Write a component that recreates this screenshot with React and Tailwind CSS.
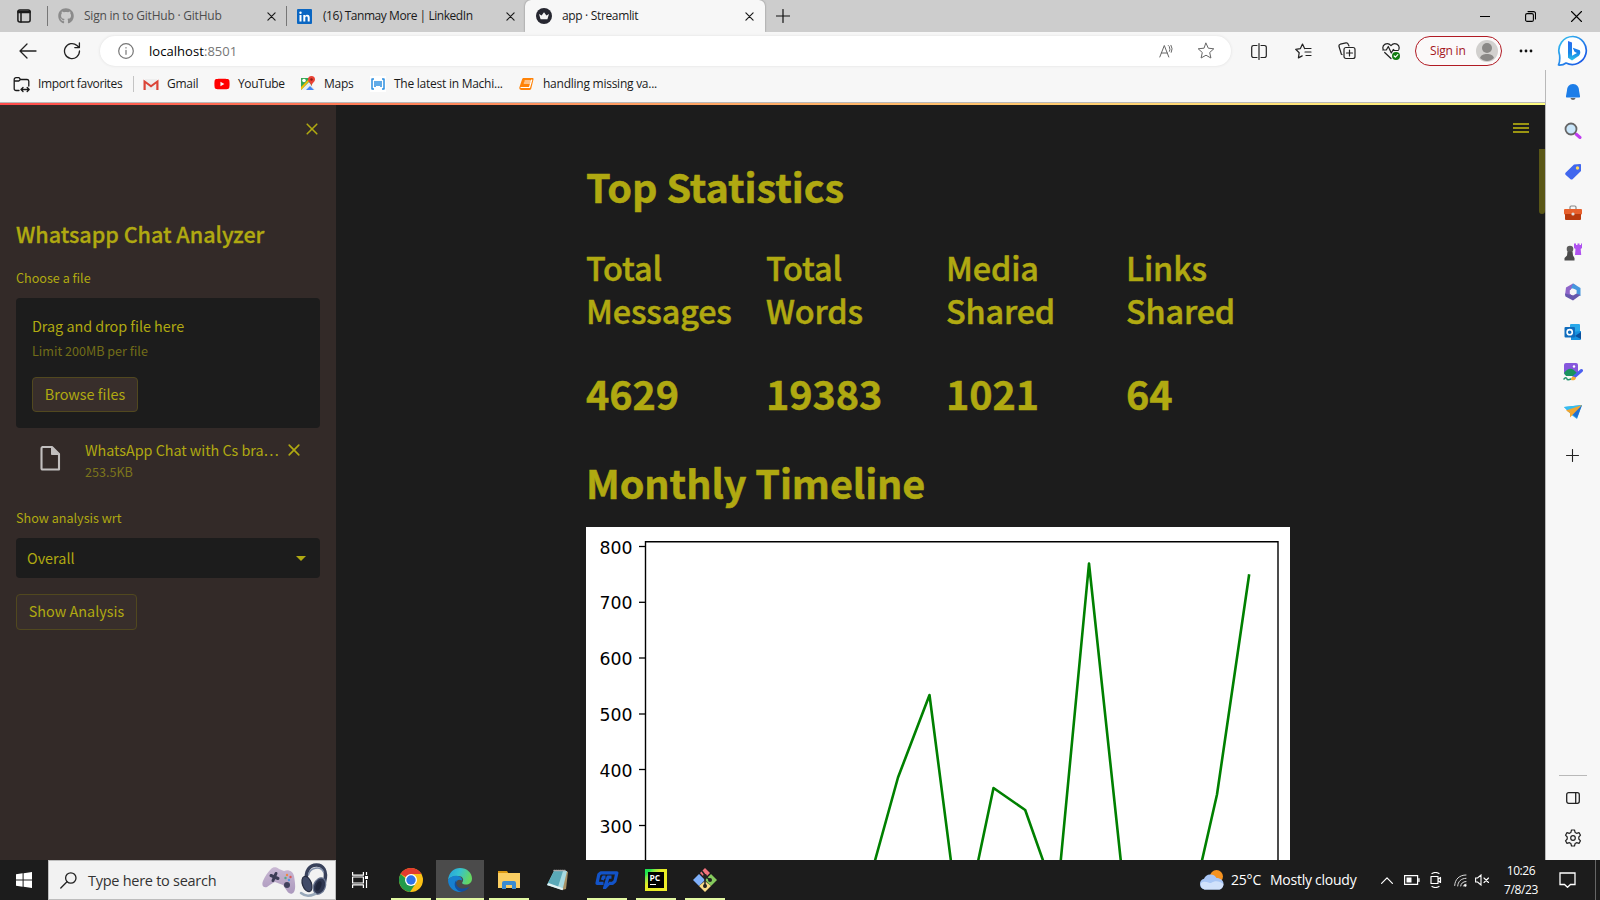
import React from "react";
import { FaGithub, FaYoutube } from "react-icons/fa";

const S = ({ w = 16, h, box, className = "", children, ...rest }) => (
  <svg
    width={w}
    height={h || w}
    viewBox={box || `0 0 ${w} ${h || w}`}
    fill="none"
    stroke="currentColor"
    strokeWidth="1.2"
    strokeLinecap="round"
    strokeLinejoin="round"
    className={`block shrink-0 ${className}`}
    {...rest}
  >
    {children}
  </svg>
);

const Cross = ({ w = 9, sw = 1.3 }) => (
  <S w={w} box="0 0 10 10" strokeWidth={sw}>
    <path d="M1 1l8 8M9 1L1 9" />
  </S>
);

function TabStrip() {
  return (
    <div className="flex h-8 shrink-0 items-stretch bg-[#cdcdcd] text-[12px] tracking-[-0.22px] text-[#1a1a1a]">
      <div className="flex w-[47px] items-center pl-[17px]">
        <S w={14} strokeWidth="1.5">
          <rect x="0.9" y="1" width="12.2" height="12" rx="2" />
          <path d="M1 2.5h12M1 3.6h12M4 4v9" />
        </S>
      </div>
      <div className="flex w-[239px] items-center">
        <div className="h-5 w-px bg-[#777]" />
        <FaGithub className="ml-[10px] size-4 text-[#8b8b8b]" />
        <span className="ml-[10px] w-[183px] whitespace-nowrap text-[#4d4d4d]">Sign in to GitHub · GitHub</span>
        <Cross />
      </div>
      <div className="flex w-[239px] items-center">
        <div className="h-5 w-px bg-[#777]" />
        <div className="ml-[10px] flex size-[15px] items-center justify-center rounded-[1px] bg-[#0a66c2]">
          <S w={11} stroke="none" fill="#fff">
            <rect x="0.5" y="4" width="2" height="6.5" />
            <circle cx="1.5" cy="1.8" r="1.2" />
            <path d="M4.3 4h2v1c.9-1.700 4.400-1.700 4.400 1.500v4h-2V7c0-2-2.400-1.800-2.400 0v3.500h-2z" />
          </S>
        </div>
        <span className="ml-[11px] w-[183px] tracking-[-0.45px] whitespace-nowrap">(16) Tanmay More | LinkedIn</span>
        <Cross />
      </div>
      <div className="flex w-[240px] items-center rounded-t-[6px] bg-[#f7f7f7] shadow-[0_0_2px_#777]">
        <S w={16} className="ml-[11px]" stroke="none">
          <circle cx="8" cy="8" r="8" fill="#262730" />
          <path d="M3 6l2.600 1.500L8 4.300l2.400 3.200L13 6l-1.600 5.200H4.600z" fill="#f5f5f5" />
        </S>
        <span className="ml-[10px] w-[183px] tracking-[-0.34px] whitespace-nowrap">app · Streamlit</span>
        <Cross />
      </div>
      <div className="flex flex-1 items-center pl-[11px]">
        <S w={14} strokeWidth="1.200" stroke="#111">
          <path d="M7 .5v13M.5 7h13" />
        </S>
      </div>
      <div className="flex items-center gap-[35px] pr-[18px] text-black">
        <S w={10} strokeWidth="1"><path d="M0 5.500h10" /></S>
        <S w={11} strokeWidth="1.100">
          <rect x=".6" y="2.600" width="7.800" height="7.800" rx="1.500" />
          <path d="M3 .6h5.500a2 2 0 0 1 2 2V8" />
        </S>
        <S w={11} strokeWidth="1.100"><path d="M.5.5l10 10M10.500.5l-10 10" /></S>
      </div>
    </div>
  );
}

function AddressBar() {
  return (
    <div className="flex h-[38px] shrink-0 items-center bg-[#f7f7f7] text-[#222]">
      <S w={18} h={16} className="ml-[19px]" strokeWidth="1.300">
        <path d="M17 8H1.500M8 1L1 8l7 7" />
      </S>
      <S w={18} className="ml-[26px]" strokeWidth="1.300">
        <path d="M16.500 9A7.500 7.500 0 1 1 14 3.500L16.200 5.500M16.400 1v4.600h-4.600" />
      </S>
      <div className="ml-[19px] flex h-[30px] w-[1131px] items-center rounded-full bg-white shadow-[0_0_3px_#ddd]">
        <S w={16} className="ml-[18px] text-[#767676]">
          <circle cx="8" cy="8" r="7.300" />
          <path d="M8 7.300v4M8 4.600v.3" />
        </S>
        <span className="ml-[15px] flex-1 pt-px text-[13px] tracking-[0.050px] text-black">
          localhost<span className="text-[#767676]">:8501</span>
        </span>
        <S w={16} className="text-[#666]" strokeWidth="1">
          <path d="M.8 14L5.300 2.500 9.800 14M2.300 10h6M10.500 4.300a4 4 0 0 1 0 4M12 2.300a7 7 0 0 1 .3 7M9.300 2.500l1 1" />
        </S>
        <S w={18} className="ml-[22px] mr-4 text-[#666]" strokeWidth="1">
          <path d="M9 1.200l2.300 5 5.500.6-4.100 3.700 1.200 5.500L9 13.200 4.100 16l1.200-5.500-4.100-3.700 5.500-.6z" />
        </S>
      </div>
      <S w={16} h={17} className="ml-5">
        <path d="M6 2.500H2.500a1.800 1.800 0 0 0-1.800 1.800v8.400a1.800 1.800 0 0 0 1.800 1.800H6M10 2.500h3.500a1.800 1.800 0 0 1 1.800 1.800v8.400a1.800 1.800 0 0 1-1.800 1.800H10M8 .6v15.800" />
      </S>
      <S w={17} h={17} className="ml-7">
        <path d="M9.600 5.600L7.500 1 5.400 5.600.7 6.300l3.500 3.400-.8 5.200 3.800-2M9.600 5.500H16M10 9h6M11 12.500h5" />
      </S>
      <S w={18} h={18} className="ml-[26px]">
        <path d="M4 12.500l-.6-.3L1 4.500A2 2 0 0 1 2.300 2.200L8 .9a2 2 0 0 1 2.200 1.300L11 4" />
        <rect x="6" y="5.500" width="11" height="11" rx="2" />
        <path d="M11.500 8v6M8.500 11h6" />
      </S>
      <S w={18} h={18} className="ml-[26px]">
        <path d="M1.200 7.500C-.5 2.500 5.500-.500 9 3.600 12.500-.5 18.500 2.500 16.800 7.500M2.700 10.500L9 16.500M.8 8h3.500l2-3.500 3 6.500 2-3.500 1 1h4" />
        <circle cx="14" cy="14" r="4" fill="#107c10" stroke="none" />
        <path d="M12.200 14l1.200 1.200 2.400-2.500" stroke="#fff" />
      </S>
      <div className="ml-[15px] flex h-[30px] w-[87px] items-center justify-between rounded-full border border-[#b11b24] bg-[#fbf9f9] pl-[14px] pr-[3px] text-[12px] tracking-[-0.200px] text-[#a4161d]">
        <span className="whitespace-nowrap">Sign in</span>
        <S w={22} stroke="none">
          <circle cx="11" cy="11" r="11" fill="#d2d0ce" />
          <circle cx="11" cy="8" r="5" fill="#8a8886" />
          <path d="M4 18c1-5.500 13-5.500 14 0-4 4-10 4-14 0z" fill="#8a8886" />
        </S>
      </div>
      <S w={14} h={4} className="ml-[17px]" stroke="none" fill="#111">
        <circle cx="2" cy="2" r="1.400" /><circle cx="7" cy="2" r="1.400" /><circle cx="12" cy="2" r="1.400" />
      </S>
      <S w={32} className="ml-6" stroke="none">
        <defs>
          <linearGradient id="bingA" x1="0" y1="0" x2="1" y2="1">
            <stop offset="0" stopColor="#35c5f0" /><stop offset="1" stopColor="#174ae4" />
          </linearGradient>
          <linearGradient id="bingB" x1="0" y1="0" x2="0" y2="1">
            <stop offset="0" stopColor="#2c6bf0" /><stop offset=".6" stopColor="#1786e8" /><stop offset="1" stopColor="#2cc3e8" />
          </linearGradient>
        </defs>
        <path d="M16 1.500a14 14 0 1 1-7 26.500c-2 1.500-5 2.200-7.500 2C3 27 3 24 2.600 20A14 14 0 0 1 16 1.500z" fill="#fff" stroke="url(#bingA)" strokeWidth="1.700" />
        <path d="M11 6l4 1.500v13.200l5-2.700-2.500-1.300-1.700-4 7 2.600c1.400 3.300-.5 5.500-2 6.300L15 25.500l-4-2.800z" fill="url(#bingB)" />
      </S>
    </div>
  );
}

function Favorites() {
  const t = "whitespace-nowrap";
  return (
    <div className="flex h-8 shrink-0 items-center bg-[#f7f7f7] pb-[4px] text-[12px] tracking-[-0.250px] text-[#1a1a1a]">
      <S w={17} h={17} className="ml-[13px]" strokeWidth="1.300">
        <path d="M6 14.500H3A1.800 1.800 0 0 1 1.200 12.700V3.500A1.800 1.800 0 0 1 3 1.700h3l1.500 1.800H14A1.800 1.800 0 0 1 15.800 5v5M1.200 5h4.600l1.700-1.500M8.500 13.500h7.500M10 11.500l-2 2 2 2M14.200 11.500l2 2-2 2" />
      </S>
      <span className={`ml-2 w-[95px] tracking-[-0.350px] ${t}`}>Import favorites</span>
      <div className="h-4 w-px bg-[#c4c4c4]" />
      <S w={16} h={12} className="ml-[9px]" stroke="none">
        <path d="M2 1h12v11H2z" fill="#eee" />
        <path d="M.5 12V1.500L8 7l7.500-5.500V12h-2.200V5.500L8 9.500 2.700 5.500V12z" fill="#db4437" />
      </S>
      <span className={`ml-2 w-[47px] ${t}`}>Gmail</span>
      <FaYoutube className="size-4 text-[#f00]" />
      <span className={`ml-2 w-[62px] tracking-[-0.400px] ${t}`}>YouTube</span>
      <S w={16} stroke="none">
        <path d="M1 2h11v12H1z" fill="#34a853" />
        <path d="M1 14L9 6l6 8z" fill="#e8eaed" />
        <path d="M6 14l4-4 4 4z" fill="#4285f4" />
        <path d="M1 11l9-9h2L1 14z" fill="#fbbc04" />
        <circle cx="4" cy="4.500" r="1.800" fill="#fff" />
        <path d="M11.500 0a3.500 3.500 0 0 1 3.500 3.500c0 2.500-3 3.500-3.500 6.500-.5-3-3.500-4-3.500-6.500A3.500 3.500 0 0 1 11.500 0z" fill="#ea4335" />
        <circle cx="11.500" cy="3.500" r="1.200" fill="#8c1d18" />
      </S>
      <span className={`ml-2 w-[46px] ${t}`}>Maps</span>
      <S w={16} className="bg-white" stroke="#2d8fe0" strokeWidth="1.500" strokeLinecap="butt">
        <path d="M4 3H2v10h2M12 3h2v10h-2M5 5v6M7 5v5M9 5v5M11 5v6" />
      </S>
      <span className={`ml-2 w-[126px] ${t}`}>The latest in Machi...</span>
      <S w={15} stroke="none" className="-ml-px">
        <path d="M4.500 1h9c.8 0 1.200.6 1 1.300l-2.300 9.500c-.2.700-.7 1.200-1.500 1.200H2.500C1 13-.2 12 .5 10L3 2.500C3.300 1.600 3.700 1 4.500 1z" fill="#ff8308" />
        <path d="M6 4h5.500M5.300 6h5.500M2 10.500h8.500L12.700 3" stroke="#fff" />
      </S>
      <span className={`ml-[9px] ${t}`}>handling missing va...</span>
    </div>
  );
}

const ACCENT = "text-[#b0a911]";

function Sidebar() {
  return (
    <aside className={`flex w-[336px] shrink-0 flex-col bg-[#332a28] px-4 font-['Noto_Sans_CJK_JP',sans-serif] ${ACCENT}`}>
      <div className="mt-[18px] flex justify-end pr-[2px]"><Cross w={12} sw={1.300} /></div>
      <h2 className="mt-[84px] text-[21.600px] leading-[30px] font-medium tracking-[-0.030px] whitespace-nowrap [-webkit-text-stroke:0.3px]">Whatsapp Chat Analyzer</h2>
      <p className="mt-[19px] text-[12.600px] leading-5">Choose a file</p>
      <div className="mt-[10px] flex h-[130px] flex-col items-start rounded-[4px] bg-[#1c1c1c] px-4 pt-4">
        <span className="text-[14.400px] leading-6 tracking-[-0.030px]">Drag and drop file here</span>
        <span className="mt-[3px] text-[12.600px] leading-5 text-[#726d18]">Limit 200MB per file</span>
        <button className="mt-4 flex h-[35px] w-[106px] items-center justify-center rounded-[4px] border border-[#51481f] bg-[#382e2b] pb-[2px] text-[14.400px]">Browse files</button>
      </div>
      <div className="mt-2 flex h-[50px] items-start pl-[21px]">
        <S w={26} h={26} className="mt-[9px] text-[#c2bfbf]" strokeWidth="2">
          <path d="M5.500 2h9.500l7 7v15.500h-16.500a1 1 0 0 1-1-1v-20a1.500 1.500 0 0 1 1-1.500z" strokeWidth="2.100" />
          <path d="M14.500 2v7.500H22z" fill="currentColor" strokeWidth="1" />
        </S>
        <div className="ml-[22px] w-[200px]">
          <div className="pt-[2px] text-[14.400px] leading-6 tracking-[-0.050px] whitespace-nowrap">WhatsApp Chat with Cs bra…</div>
          <div className="text-[12.600px] leading-5 text-[#7c751b]">253.5KB</div>
        </div>
        <div className="mt-2 ml-[3px]"><Cross w={12} sw={1.400} /></div>
      </div>
      <p className="mt-[22px] text-[12.600px] leading-5">Show analysis wrt</p>
      <div className="mt-[10px] flex h-10 items-center justify-between rounded-[4px] bg-[#1c1c1c] pr-[14px] pl-[11px] text-[14.400px]">
        <span>Overall</span>
        <S w={10} h={5} stroke="none" fill="#b0a911"><path d="M0 0h10L5 5z" /></S>
      </div>
      <button className="mt-4 flex h-9 w-[121px] items-center justify-center rounded-[4px] border border-[#51481f] bg-[#382e2b] pb-[3px] text-[14.400px] whitespace-nowrap">Show Analysis</button>
    </aside>
  );
}

const ticks = [
  [800, 19.500], [700, 75.300], [600, 131], [500, 187], [400, 242.500], [300, 298.500],
];

function Chart() {
  return (
    <svg width="704" height="340" viewBox="0 0 704 340" className="mt-[19px] block bg-white">
      <path d="M59.500 345V14.800H692V345" fill="none" stroke="#000" strokeWidth="1.400" />
      {ticks.map(([v, y]) => (
        <g key={v}>
          <path d={`M53 ${y}h6`} stroke="#000" strokeWidth="1.300" />
          <text x="46.500" y={y + 7} textAnchor="end" fontSize="17.300" fontFamily="DejaVu Sans, sans-serif" fill="#000">{v}</text>
        </g>
      ))}
      <path
        d="M280 366L312 250.500 343.500 168 375.300 414 407.500 261 439.200 283 471 373 503 36.500 536 345M607 373L631 267.500 663 48.500"
        fill="none" stroke="#008000" strokeWidth="2.600" strokeLinejoin="round" strokeLinecap="square"
      />
    </svg>
  );
}

const stats = [
  ["Total", "Messages", "4629"],
  ["Total", "Words", "19383"],
  ["Media", "Shared", "1021"],
  ["Links", "Shared", "64"],
];

function Main() {
  return (
    <main className={`relative flex-1 overflow-hidden bg-[#1c1c1c] pl-[250px] font-['Noto_Sans_CJK_JP',sans-serif] ${ACCENT}`}>
      <S w={16} h={10} className="absolute top-[18px] right-4" strokeWidth="2" strokeLinecap="butt" stroke="#9b9512">
        <path d="M0 1h16M0 5h16M0 9h16" />
      </S>
      <div className="absolute top-11 right-0 h-[65px] w-[6px] rounded-b-[3px] bg-[#5a5716]" />
      <h1 className="mt-[54px] text-[39.600px] leading-[53px] font-bold tracking-[-0.080px] [-webkit-text-stroke:0.5px]">Top Statistics</h1>
      <div className="mt-[33px] grid w-[704px] grid-cols-4 gap-4">
        {stats.map(([a, b, n]) => (
          <div key={a + b} className="whitespace-nowrap">
            <h2 className="text-[32.400px] leading-[43px] font-medium tracking-[-0.160px] [-webkit-text-stroke:0.5px]">{a}<br />{b}</h2>
            <div className="mt-[35px] text-[39.600px] leading-[53px] font-bold tracking-[-0.100px] [-webkit-text-stroke:0.5px]">{n}</div>
          </div>
        ))}
      </div>
      <h1 className="mt-[36px] text-[39.600px] leading-[53px] font-bold tracking-[-0.100px] [-webkit-text-stroke:0.5px]">Monthly Timeline</h1>
      <Chart />
    </main>
  );
}

function EdgeBar() {
  return (
    <aside className="flex w-[55px] shrink-0 flex-col items-center border-l border-[#b9b9b9] bg-[#f7f7f7] pt-[13px] pr-px text-[#222]">
      <div className="flex flex-col items-center gap-[22px]">
        <S w={18} stroke="none">
          <path d="M9 1c4 0 6 3 6 6.500l1 5.500c.2 1-.3 1.500-1 1.500H3c-.7 0-1.200-.5-1-1.500l1-5.500C3 4 5 1 9 1z" fill="#1c7de8" />
          <path d="M6.500 15h5c-.4 2.500-4.600 2.500-5 0z" fill="#666" />
        </S>
        <S w={18} className="-mt-px mb-px">
          <path d="M12 12l4 3.500" stroke="#c03cf0" strokeWidth="3" />
          <circle cx="7" cy="7" r="5.500" fill="#c9e6fa" stroke="#666" strokeWidth="1.800" />
        </S>
        <S w={18} stroke="none">
          <path d="M10 1.500l6-.5c.6 0 1 .4 1 1v6l-8.200 8c-.8.800-1.700.8-2.500 0L1.800 12c-.8-.8-.8-1.700 0-2.500z" fill="#4167ee" />
          <circle cx="13.500" cy="5" r="1.700" fill="#ffd95a" />
        </S>
        <S w={18} className="mt-px" stroke="none">
          <path d="M6 5V3.200C6 2.500 6.500 2 7.200 2h3.600c.7 0 1.200.5 1.200 1.200V5" stroke="#888" strokeWidth="1.200" />
          <rect x="0" y="5" width="18" height="5.500" rx="1" fill="#e8602c" />
          <path d="M1 10h16v5a1 1 0 0 1-1 1H2a1 1 0 0 1-1-1z" fill="#b93a0e" />
          <circle cx="9" cy="10" r="1.600" fill="#ddd" />
        </S>
        <S w={18} className="-mt-px" stroke="none">
          <path d="M10 .5h2v1.500h1.500V.5h2V2H17V.5h1V5l-1.300 1 .5 6H11L11.500 6 10 5z" fill="#b052f0" />
          <circle cx="6" cy="6" r="3.300" fill="#5c5c5c" />
          <path d="M3.500 8.500h5l.5 4 1.500 2.500v2.500h-10V15L3 12.500z" fill="#4a4a4a" />
        </S>
        <S w={18} stroke="none">
          <path d="M2 4.500L9 .5l3.500 2L7 6v6L1 12.500z" fill="#8e65c9" />
          <path d="M9 .5l7.500 4.500v8L12.500 11V7L7 5z" fill="#4697de" />
          <path d="M1 10.500l6 1.500 5-1.500 4.500 1.500L9 17.500 1.500 13.500z" fill="#6658ad" />
          <path d="M9 5.500l3.200 1.800v3.500L9 12.600l-3.200-1.800V7.300z" fill="#f7f7f7" />
        </S>
        <S w={18} stroke="none">
          <rect x="6" y="1" width="10" height="12" rx="1" fill="#28a8ea" />
          <path d="M7 9l10-1v8a1 1 0 0 1-1 1H7z" fill="#1490df" /><path d="M11 13l6-4v7z" fill="#0a4f9c" />
          <rect x=".5" y="4" width="10.500" height="10.500" rx="1" fill="#0f6cbd" />
          <circle cx="5.700" cy="9.200" r="2.600" stroke="#fff" strokeWidth="1.600" />
        </S>
        <S w={20} h={18} stroke="none">
          <rect x="1" y="0" width="14" height="12" rx="2" fill="#8657dd" />
          <path d="M1 10c5-6 8-5 13 0l-3 3H3z" fill="#19935e" /><circle cx="11" cy="3.500" r="1.200" fill="#fff" />
          <path d="M1 16c2-2 3-1 3 0s2 1 4 0" stroke="#21926b" strokeWidth="1.500" />
          <path d="M11 14l7.500-6.500" stroke="#4b5ff0" strokeWidth="3" /><path d="M8 17c0-3 2-4.500 4-3s0 4-4 3z" fill="#f6ac35" />
        </S>
        <S w={18} h={16} className="mt-px" stroke="none">
          <path d="M0 3l18-2-5 14-5.500-4L0 3z" fill="#2ca7e8" /><path d="M18 1l-5 13-5-4z" fill="#1f6fd2" />
          <path d="M0 3l18-2L6.500 8.500z" fill="#34bdf0" /><path d="M2 6.500L18 1 6 13.500V9z" fill="#f0a52e" />
        </S>
      </div>
      <S w={13} className="mt-[29px]" strokeWidth="1.100"><path d="M6.500.5v12M.5 6.500h12" /></S>
      <div className="flex-1" />
      <div className="h-px w-7 bg-[#b9b9b9]" />
      <S w={14} h={12} className="mt-4" strokeWidth="1.300"><rect x=".7" y=".7" width="12.600" height="10.600" rx="2" /><path d="M9.700 1v10" /></S>
      <S w={18} className="mt-[25px] mb-[13px]" strokeWidth="1.200">
        <path d="M7.500 1h3l.6 2.400 1.500.9 2.400-.7 1.500 2.600L14.800 8v2l1.700 1.800-1.500 2.600-2.400-.7-1.500.9-.6 2.400h-3l-.6-2.400-1.500-.9-2.400.7-1.500-2.600L3.200 10V8L1.500 6.200 3 3.600l2.400.7 1.500-.9z" />
        <circle cx="9" cy="9" r="2.300" />
      </S>
    </aside>
  );
}

function TaskButton({ children, line = "w-[40px]", active }) {
  return (
    <div className={`flex h-10 flex-col items-center ${active ? "ml-px w-12 bg-[#4b4b4b]" : "w-[49px]"}`}>
      <div className="flex h-[38px] items-center justify-center pt-[2px]">{children}</div>
      <div className={`h-[2px] ${line} bg-[#e2f8a2]`} />
    </div>
  );
}

function Taskbar() {
  return (
    <footer className="flex h-10 shrink-0 items-center bg-[#1c1c1c] text-white">
      <div className="flex w-12 justify-center">
        <S w={16} stroke="none" fill="#fff"><path d="M0 2.300L6.600 1.300v6.200H0zM7.600 1.200L16 0v7.500H7.600zM0 8.500h6.600v6.200L0 13.800zM7.600 8.500H16V16l-8.400-1.200z" /></S>
      </div>
      <div className="flex h-10 w-72 items-center border border-[#bdbdbd] bg-[#f2f2f2] pl-[11px] text-[#222]">
        <S w={17} strokeWidth="1.300"><circle cx="10.800" cy="6" r="5.200" /><path d="M7 9.800L.8 16" /></S>
        <span className="ml-[11px] w-[174px] pt-[2px] text-[14.500px] tracking-[-0.270px] whitespace-nowrap text-[#333]">Type here to search</span>
        <S w={34} h={29} stroke="none">
          <defs><linearGradient id="pad" x1="0" y1="0" x2="0" y2="1"><stop offset="0" stopColor="#c9b8d3" /><stop offset="1" stopColor="#ab98bd" /></linearGradient></defs>
          <path d="M9 3c2-2.500 6-2 8 0l5 2c4-2 9 0 10 5 1 6 2 12 0 16-2 3-5 2-7-1l-4-6-8-3c-3 1-5 3-8 5-3 1-6-1-4-6 2-5 5-9 8-12z" fill="url(#pad)" />
          <path d="M9 9.500l7 3M14 7.500l-3 7" stroke="#3c3c55" strokeWidth="3" />
          <circle cx="25" cy="19" r="3" fill="#40405c" /><circle cx="25" cy="9" r="1.200" fill="#e84" /><circle cx="28.500" cy="11" r="1.200" fill="#d55" /><circle cx="23.500" cy="12" r="1.200" fill="#5a8" /><circle cx="27" cy="14" r="1.200" fill="#59d" />
        </S>
        <S w={30} h={36} className="ml-[3px]">
          <path d="M7.500 20C6 8 11 3 17.500 3s11 6 8 17" stroke="#38415b" strokeWidth="3.500" />
          <path d="M9.500 13c1-7 12-10 15-3" stroke="#8390aa" strokeWidth="1.500" />
          <ellipse cx="8" cy="22" rx="4.500" ry="8" fill="#414b68" stroke="#252c40" transform="rotate(-20 8 22)" />
          <ellipse cx="20.500" cy="24" rx="5.800" ry="8.500" fill="#2e3650" stroke="#68748f" transform="rotate(22 20.500 24)" />
          <ellipse cx="19.500" cy="24" rx="2.500" ry="5" fill="#1f263b" stroke="none" transform="rotate(22 19.500 24)" />
          <path d="M2 31c5 4 9 3 14 1" stroke="#98a8ba" strokeWidth="2.500" />
        </S>
      </div>
      <div className="flex w-[50px] justify-center pr-px">
        <S w={17} h={16} strokeWidth="1.200" strokeLinecap="butt">
          <path d="M.6 0v3.200h10.800V0M.6 16v-3.200h10.800V16M.6 5h10.800v6H.6zM14.500 0v3M14.500 8v8" /><rect x="13" y="4" width="3" height="3" fill="#fff" stroke="none" />
        </S>
      </div>
      <TaskButton>
        <S w={24} stroke="none">
          <circle cx="12" cy="12" r="12" fill="#fbc116" />
          <path d="M12 12L1.600 6A12 12 0 0 1 22.400 6H12z" fill="#e33b2e" />
          <path d="M1.600 6A12 12 0 0 0 11 24l6-9H12z" fill="#229a4b" />
          <circle cx="12" cy="12" r="6" fill="#fff" /><circle cx="12" cy="12" r="4.700" fill="#2f73e8" />
        </S>
      </TaskButton>
      <TaskButton active line="w-12">
        <S w={24} stroke="none">
          <defs>
            <linearGradient id="edgeTop" x1="0" y1="0" x2="1" y2=".3"><stop offset="0" stopColor="#239fdc" /><stop offset=".5" stopColor="#35c1d0" /><stop offset="1" stopColor="#64d763" /></linearGradient>
          </defs>
          <path d="M0 12C1 4 6 0 12 0c7 0 12 5 12 10.500 0 4-3 6-6 6-3.500 0-4.500-1.500-3.500-2.500 2-3-.5-6-4-6C6 7.500 2 9 0 12z" fill="url(#edgeTop)" />
          <path d="M0 12c2-3 6-5 10-4 3 .5 4.500 3 4 4.500-4-2-7 1-6 5 1 4 4 6 7 6.100C7 25.500 0 19.500 0 12z" fill="#1780cf" />
          <path d="M8.500 12c-2 7 5 11.500 13 6.500-2 3-5 5-8 5.300-6-.5-9-8-5-11.800z" fill="#124f9e" />
        </S>
      </TaskButton>
      <TaskButton>
        <S w={22} h={18} stroke="none">
          <path d="M0 0h9l1.500 2.500H0z" fill="#dd9a13" /><path d="M0 2h22v15H0z" fill="#fbce62" />
          <path d="M4 18v-6a2 2 0 0 1 2-2h10a2 2 0 0 1 2 2v6h-4v-4H8v4z" fill="#3a8bd0" />
        </S>
      </TaskButton>
      <TaskButton line="w-0">
        <S w={24} stroke="none">
          <path d="M18 2l4 2-2 17-4 1z" fill="#a89165" /><path d="M8 3l13 0-4.500 19L1 17z" fill="#a7dbe2" />
          <path d="M8 3l9 0-5 16-11-2z" fill="#5aa9b8" /><path d="M1 17l15.500 5.200.6-2L2.500 15z" fill="#e4f2f3" />
          <path d="M8 2.500h12" stroke="#aaa" strokeWidth="1.500" strokeDasharray="1 1" />
        </S>
      </TaskButton>
      <TaskButton>
        <S w={24} h={18} stroke="#1253c8" strokeWidth="3.200" strokeLinejoin="round" strokeLinecap="butt">
          <path d="M8.500 12.300H2L3.800 3.600 6 1.800H21.900L20 10 17.600 12.300H13.800M16.500 6.200H13L9.600 17 14 12.300M10.500 6.200H8.300L7.300 9" />
        </S>
      </TaskButton>
      <TaskButton>
        <div className="flex size-[22px] items-center justify-center bg-linear-to-br from-[#20e450] from-15% via-[#e4ea22] via-40% to-[#f1ee2c]">
          <div className="flex size-4 flex-col bg-black pl-[2px] font-['Open_Sans'] text-[8.500px] leading-[11px] font-bold text-white">
            <span>PC</span><span className="mt-px h-px w-[6px] bg-white" />
          </div>
        </div>
      </TaskButton>
      <TaskButton>
        <S w={24} stroke="none">
          <path d="M12 0l5 5-5 5-5-5z" fill="#f2737d" /><path d="M6 6l6 6-6 6-6-6z" fill="#7fb0fa" />
          <path d="M18 6l6 6-6 6-6-6z" fill="#85ca5d" /><path d="M12 13l6 5-6 6-6-6z" fill="#fadb86" />
          <path d="M9 3l3 4v12M12 8l5 4" stroke="#222" strokeWidth="1.500" /><circle cx="12" cy="8" r="2" fill="#222" /><circle cx="17" cy="12" r="2" fill="#222" /><circle cx="12" cy="18" r="2" fill="#222" />
        </S>
      </TaskButton>
      <div className="flex-1" />
      <S w={25} h={22} stroke="none">
        <circle cx="17.500" cy="7.500" r="6.500" fill="#f5921f" />
        <path d="M5.500 20.500A5.500 5.500 0 0 1 5 9.800 7 7 0 0 1 17.500 9c4 0 7 2.500 7 5.700 0 3.800-2.500 5.800-5 5.800z" fill="#a9c6f5" />
        <path d="M5.500 20.500A5 5 0 0 1 2 14c4-3 8 0 10 0 4-3 9-2 12.400 1 0 3.500-2.400 5.500-4.900 5.500z" fill="#d1e1fb" />
      </S>
      <span className="ml-[7px] w-[39px] pb-px text-[14px] tracking-[-0.200px]">25°C</span>
      <span className="w-[111px] pb-px text-[14px] tracking-[-0.250px] whitespace-nowrap">Mostly cloudy</span>
      <S w={12} h={7}><path d="M.6 6.400L6 .8l5.400 5.600" /></S>
      <S w={16} h={10} className="ml-[11px]" strokeLinejoin="miter"><path d="M.6.600h13v8.800H.6zM15 3.500v3" /><rect x="2.500" y="2.500" width="5" height="5" fill="#fff" stroke="none" /></S>
      <S w={12} h={16} className="ml-[10px]" strokeLinejoin="round"><path d="M1 4.500h7v7H1zM8.500 7l2-1.500v5L8.500 9M2 1.500c2-1.200 5-1.200 7 0M2 14.500c2 1.200 5 1.200 7 0" /></S>
      <S w={13} className="ml-3" strokeWidth="1" stroke="#ddd"><path d="M.7 11.500C1 5 5.500 1 12 1M3.700 12C4 7.500 7 4.500 12 4.300M6.700 12c.3-2.500 2-4.300 5.300-4.500M9.500 12c.2-1 1-1.500 2.500-1.800" /><circle cx="11.300" cy="11.500" r="1.200" fill="#fff" stroke="none" /></S>
      <S w={15} h={12} className="ml-2" strokeLinejoin="miter" strokeWidth="1.100"><path d="M.6 4h2L6 1v10L2.600 8h-2zM9 4l4.500 4.500M13.500 4L9 8.500" /></S>
      <div className="ml-[9px] flex w-[44px] flex-col items-center text-[12px] leading-[19px] tracking-[-0.400px]">
        <span>10:26</span><span className="whitespace-nowrap">7/8/23</span>
      </div>
      <S w={17} h={16} className="ml-4" strokeWidth="1.300" strokeLinejoin="miter"><path d="M1 1h15v11.500h-4.500L8.500 15.300 5.500 12.500H1z" /></S>
      <div className="ml-[19px] mr-1 h-10 w-px bg-[#666]" />
    </footer>
  );
}

export default function App() {
  return (
    <div className="flex h-[900px] w-[1600px] flex-col overflow-hidden bg-[#f7f7f7] font-['Open_Sans',sans-serif]">
      <TabStrip />
      <AddressBar />
      <div className="flex min-h-0 flex-1">
        <div className="flex min-w-0 flex-1 flex-col">
          <Favorites />
          <div className="h-px shrink-0 bg-[#b9b9b9]" />
          <div className="h-[2px] shrink-0 bg-linear-to-r from-[#ff4b4b] to-[#fffd80]" />
          <div className="flex min-h-0 flex-1">
            <Sidebar />
            <Main />
          </div>
        </div>
        <EdgeBar />
      </div>
      <Taskbar />
    </div>
  );
}
